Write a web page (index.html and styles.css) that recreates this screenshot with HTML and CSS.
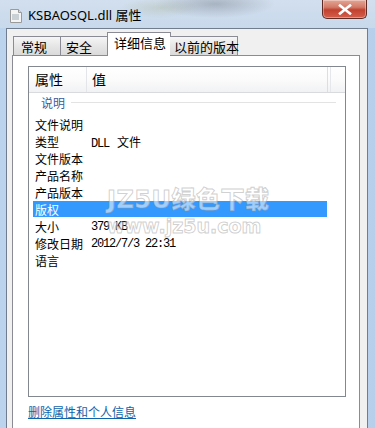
FILE: index.html
```html
<!DOCTYPE html>
<html lang="zh-CN">
<head>
    <meta charset="UTF-8">
    <meta name="viewport" content="width=device-width, initial-scale=1.0">
    <title>KSBAOSQL.dll 属性</title>
    <link rel="stylesheet" href="styles.css">
</head>
<body>
    <div class="window">
        <div class="titlebar">
            <svg class="title-icon" width="12" height="14" viewBox="0 0 12 14">
                <path d="M0.5 0.5h8l3 3v10h-11z" fill="#f4f4f4" stroke="#9a9a9a"/>
                <path d="M8.5 0.5v3h3" fill="#dcdcdc" stroke="#9a9a9a"/>
                <rect x="2" y="5" width="7" height="6" fill="#c9d0d6"/>
            </svg>
            <span class="title-text">KSBAOSQL.dll 属性</span>
            <button class="close-btn" type="button">
                <svg width="14" height="11" viewBox="0 0 14 11">
                    <path d="M2 1.5l10 8M12 1.5l-10 8" stroke="#ffffff" stroke-width="2.6" stroke-linecap="square"/>
                </svg>
            </button>
        </div>

        <div class="client">
            <div class="tabs">
                <div class="tab tab-general">常规</div>
                <div class="tab tab-security">安全</div>
                <div class="tab tab-active">详细信息</div>
                <div class="tab tab-versions">以前的版本</div>
            </div>

            <div class="panel">
                <div class="listbox">
                    <div class="list-header">
                        <div class="col-name">属性</div>
                        <div class="col-value">值</div>
                        <div class="col-rest"></div>
                    </div>

                    <div class="group">
                        <span class="group-title">说明</span>
                        <span class="group-line"></span>
                    </div>

                    <div class="rows">
                        <div class="row"><span class="label">文件说明</span><span class="value"></span></div>
                        <div class="row"><span class="label">类型</span><span class="value"><span class="mono">DLL </span><span class="cjk-val">文件</span></span></div>
                        <div class="row"><span class="label">文件版本</span><span class="value"></span></div>
                        <div class="row"><span class="label">产品名称</span><span class="value"></span></div>
                        <div class="row"><span class="label">产品版本</span><span class="value"></span></div>
                        <div class="row selected"><span class="label">版权</span><span class="value"></span></div>
                        <div class="row"><span class="label">大小</span><span class="value mono">379 KB</span></div>
                        <div class="row"><span class="label">修改日期</span><span class="value mono">2012/7/3 22:31</span></div>
                        <div class="row"><span class="label">语言</span><span class="value"></span></div>
                    </div>

                    <div class="watermark">
                        <div class="wm-big">JZ5U绿色下载</div>
                        <div class="wm-small">www.jz5u.com</div>
                    </div>
                </div>

                <a class="remove-link" href="#">删除属性和个人信息</a>
            </div>
        </div>
    </div>
</body>
</html>
```

FILE: styles.css
```css
body {
    margin: 0;
    padding: 0;
    width: 375px;
    height: 428px;
    overflow: hidden;
    font-family: "Noto Sans", "Noto Sans CJK SC", sans-serif;
}
.window {
    height: 428px;
    display: flex;
    flex-direction: column;
    background: linear-gradient(90deg, #bcd3ee 0%, #c9dbef 50%, #b8cfeb 100%);
}
.titlebar {
    height: 28px;
    flex: none;
    display: flex;
    align-items: flex-start;
    background:
        radial-gradient(ellipse 60px 14px at 215px 4px, rgba(120, 128, 140, 0.45), rgba(120, 128, 140, 0) 100%),
        radial-gradient(ellipse 40px 10px at 160px 8px, rgba(170, 180, 150, 0.35), rgba(170, 180, 150, 0) 100%),
        linear-gradient(180deg, #d2dfee 0%, #c8d9ec 100%);
}
.title-icon {
    margin: 9px 0 0 10px;
}
.title-text {
    margin: 6px 0 0 6px;
    font-size: 13px;
    line-height: 18px;
    color: #000;
}
.close-btn {
    margin-left: auto;
    margin-right: 8px;
    width: 45px;
    height: 19px;
    padding: 0;
    border: 1px solid #5e2b25;
    border-top: none;
    border-radius: 0 0 5px 5px;
    background: linear-gradient(180deg, #e5a595 0%, #d27a68 40%, #c2412f 55%, #d4604b 100%);
    display: flex;
    align-items: center;
    justify-content: center;
    box-shadow: inset 0 0 0 1px rgba(255, 255, 255, 0.35);
}
.client {
    flex: 1;
    margin: 0 7px 0 6px;
    border: 1px solid #6f7d8e;
    border-bottom: none;
    background: #f0f0f0;
    padding: 4px 7px 0 5px;
    display: flex;
    flex-direction: column;
}
.tabs {
    display: flex;
    align-items: flex-end;
    padding-left: 1px;
    height: 23px;
    position: relative;
    z-index: 1;
    margin-bottom: -1px;
}
.tab {
    box-sizing: border-box;
    height: 19px;
    border: 1px solid #898c95;
    border-bottom: none;
    background: linear-gradient(180deg, #f6f6f6 0%, #e6e6e6 50%, #dadada 100%);
    font-family: "Noto Sans CJK SC", sans-serif;
    font-size: 13px;
    line-height: 19px;
    color: #000;
    white-space: nowrap;
    margin-bottom: 1px;
}
.tab-general {
    width: 48px;
    padding-left: 7px;
}
.tab-security {
    width: 47px;
    padding-left: 5px;
    border-left: none;
}
.tab-active {
    height: 24px;
    width: 64px;
    padding-left: 6px;
    background: #ffffff;
    line-height: 20px;
    margin-bottom: 0;
    margin-left: -1px;
    margin-right: -1px;
}
.tab-versions {
    width: 68px;
    padding-left: 4px;
    border-left: none;
}
.panel {
    flex: 1;
    border: 1px solid #898c95;
    border-bottom: none;
    background: #ffffff;
    padding: 10px 13px 0 15px;
}
.listbox {
    position: relative;
    height: 329px;
    border: 1px solid #828790;
    overflow: hidden;
}
.list-header {
    height: 25px;
    display: flex;
    background: linear-gradient(180deg, #ffffff 0%, #fbfbfb 50%, #f1f2f4 100%);
    border-bottom: 1px solid #d8dadd;
    font-family: "Noto Sans CJK SC", sans-serif;
    font-size: 14px;
    line-height: 25px;
}
.col-name {
    width: 51px;
    padding-left: 6px;
    border-right: 1px solid #e3e5e8;
}
.col-value {
    width: 235px;
    padding-left: 5px;
    border-right: 1px solid #dcdee2;
}
.col-rest {
    width: 2px;
    border-right: 1px solid #e6e7ea;
}
.group {
    height: 18px;
    display: flex;
    align-items: center;
    padding-left: 12px;
    padding-right: 9px;
    gap: 6px;
}
.group-title {
    font-family: "Noto Sans CJK SC", sans-serif;
    font-size: 12px;
    color: #3b5a9c;
}
.group-line {
    flex: 1;
    height: 1px;
    background: #e3e3e3;
}
.rows {
    margin-top: 5px;
    padding-left: 4px;
}
.row {
    width: 294px;
    height: 17px;
    display: flex;
    align-items: center;
    font-family: "Noto Sans CJK SC", sans-serif;
    font-size: 12px;
    color: #000;
}
.row.selected {
    height: 16px;
    margin-bottom: 1px;
    background: #3399ff;
    color: #ffffff;
}
.label {
    width: 56px;
    padding-left: 2px;
}
.value {
    white-space: pre;
}
.mono {
    font-family: "Liberation Mono", monospace;
    font-size: 12px;
    letter-spacing: -1.2px;
}
.cjk-val {
    margin-left: 2px;
}
.watermark {
    position: absolute;
    left: 78px;
    top: 117px;
    font-family: "DejaVu Sans", "Noto Sans CJK SC", sans-serif;
    font-weight: 900;
    color: rgba(255, 255, 255, 0.55);
    -webkit-text-stroke: 1px rgba(150, 150, 150, 0.45);
    pointer-events: none;
    white-space: nowrap;
}
.wm-big {
    font-size: 24px;
    line-height: 32px;
    letter-spacing: 0.5px;
}
.wm-small {
    font-size: 19px;
    line-height: 20px;
}
.remove-link {
    display: block;
    margin-top: 8px;
    width: max-content;
    font-family: "Noto Sans CJK SC", sans-serif;
    font-size: 12px;
    line-height: 14px;
    color: #0e63ad;
    text-decoration: underline;
}
```
